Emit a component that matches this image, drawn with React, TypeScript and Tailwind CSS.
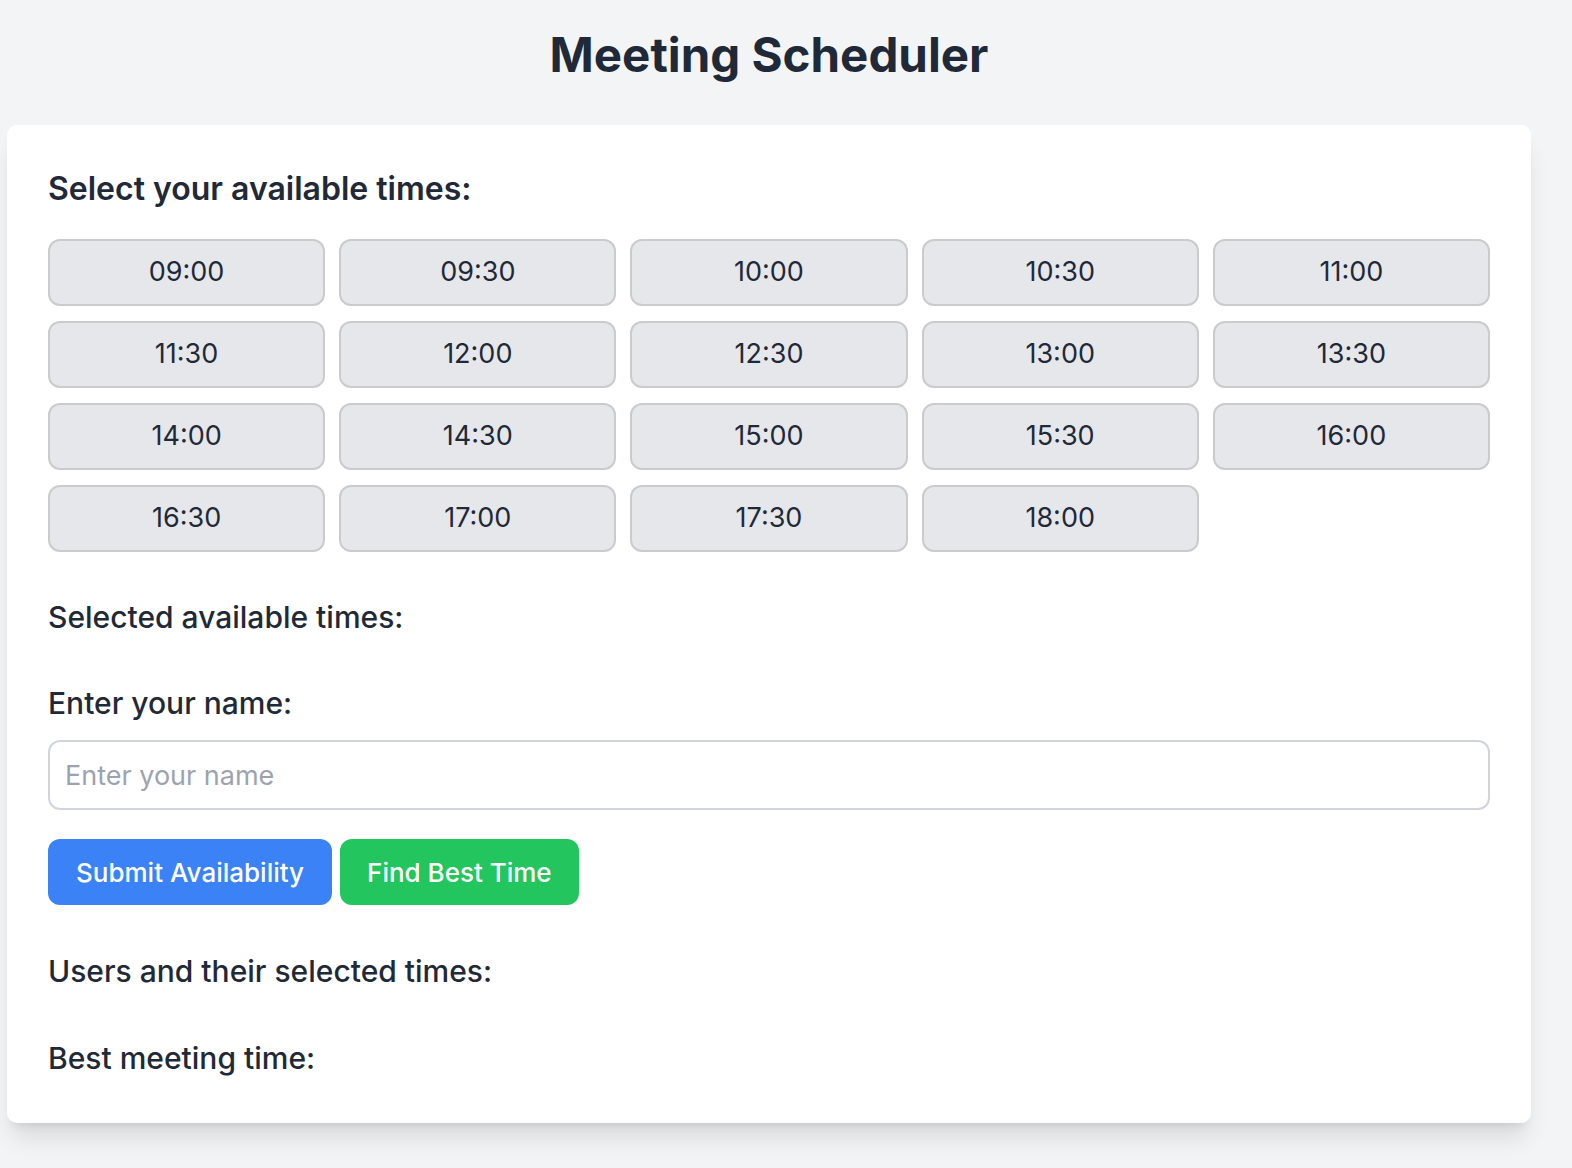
import { useState } from "react";

const TIMES = [
    "09:00", "09:30", "10:00", "10:30", "11:00",
    "11:30", "12:00", "12:30", "13:00", "13:30",
    "14:00", "14:30", "15:00", "15:30", "16:00",
    "16:30", "17:00", "17:30", "18:00",
];

export default function App() {
    const [selected, setSelected] = useState<string[]>([]);
    const [name, setName] = useState("");

    const toggle = (t: string) =>
        setSelected((s) => (s.includes(t) ? s.filter((x) => x !== t) : [...s, t]));

    return (
        <div className="min-h-screen bg-[#f3f4f6] font-['Inter',sans-serif] text-[#1f2937]">
            <div className="w-[1524px] ml-[7px] pt-[26px]">
                <h1 className="text-center text-[47.5px] leading-[58px] font-bold mb-[41px]">
                    Meeting Scheduler
                </h1>

                <div className="bg-white rounded-[10px] shadow-xl px-[41px] pt-[44px] pb-[46px]">
                    <h2 className="text-[32px] leading-[40px] font-semibold mb-[30px]">
                        Select your available times:
                    </h2>

                    <div className="grid grid-cols-5 gap-x-[14px] gap-y-[15px]">
                        {TIMES.map((t) => (
                            <button
                                key={t}
                                onClick={() => toggle(t)}
                                className={
                                    selected.includes(t)
                                        ? "h-[67px] rounded-[12px] border-2 border-[#3b82f6] bg-[#dbeafe] text-[27px]"
                                        : "h-[67px] rounded-[12px] border-2 border-[#cbcbcb] bg-[#e5e7eb] text-[27px]"
                                }
                            >
                                {t}
                            </button>
                        ))}
                    </div>

                    <h3 className="mt-[46px] text-[30px] leading-[38px] font-medium">
                        Selected available times:
                    </h3>
                    <p className="h-[10px]">{selected.join(", ")}</p>

                    <label className="block mt-[38px] text-[30px] leading-[38px] font-medium">
                        Enter your name:
                    </label>
                    <input
                        value={name}
                        onChange={(e) => setName(e.target.value)}
                        placeholder="Enter your name"
                        className="mt-[18px] w-full h-[70px] rounded-[12px] border-2 border-[#d1d5db] px-[15px] text-[27px] placeholder:text-[#9ca3af] outline-none"
                    />

                    <div className="flex gap-[8px] mt-[29px]">
                        <button className="h-[66px] px-[28px] rounded-[12px] bg-[#3b82f6] text-white text-[26px] font-medium">
                            Submit Availability
                        </button>
                        <button className="h-[66px] px-[27px] rounded-[12px] bg-[#22c55e] text-white text-[26px] font-medium">
                            Find Best Time
                        </button>
                    </div>

                    <h3 className="mt-[47px] text-[30px] leading-[38px] font-medium">
                        Users and their selected times:
                    </h3>

                    <h3 className="mt-[49px] text-[30px] leading-[38px] font-medium">
                        Best meeting time:
                    </h3>
                </div>
            </div>
        </div>
    );
}
